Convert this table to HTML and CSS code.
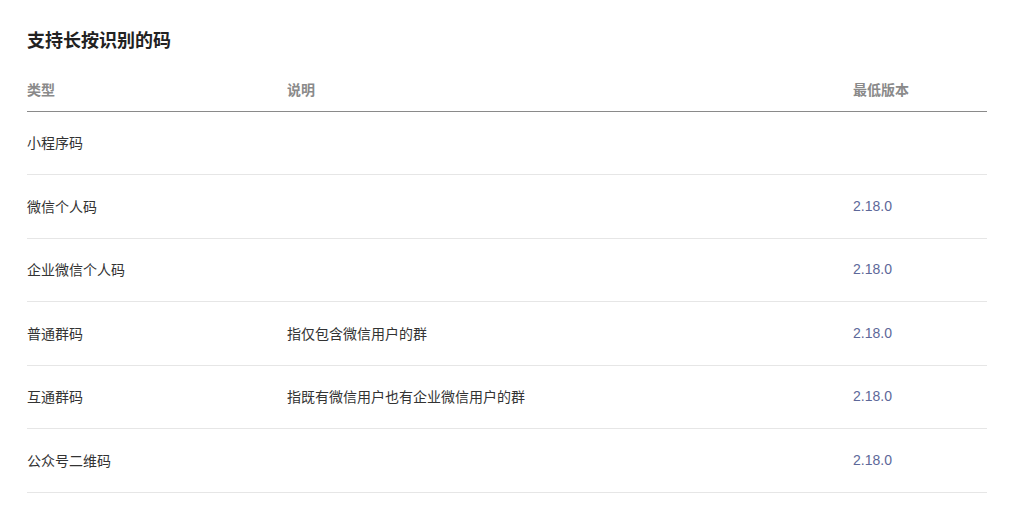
FILE: index.html
```html
<!DOCTYPE html>
<html lang="zh-CN">
<head>
<meta charset="utf-8">
<link rel="stylesheet" href="styles.css">
</head>
<body>
<div class="page">
  <h2 class="title">支持长按识别的码</h2>
  <table class="codes">
    <thead>
      <tr>
        <th class="c-type">类型</th>
        <th class="c-desc">说明</th>
        <th class="c-ver">最低版本</th>
      </tr>
    </thead>
    <tbody>
      <tr><td>小程序码</td><td></td><td class="ver"></td></tr>
      <tr><td>微信个人码</td><td></td><td class="ver">2.18.0</td></tr>
      <tr><td>企业微信个人码</td><td></td><td class="ver">2.18.0</td></tr>
      <tr><td>普通群码</td><td>指仅包含微信用户的群</td><td class="ver">2.18.0</td></tr>
      <tr><td>互通群码</td><td>指既有微信用户也有企业微信用户的群</td><td class="ver">2.18.0</td></tr>
      <tr><td>公众号二维码</td><td></td><td class="ver">2.18.0</td></tr>
    </tbody>
  </table>
</div>
</body>
</html>
```

FILE: styles.css
```css
html, body {
  margin: 0;
  padding: 0;
  background: #ffffff;
}
body {
  font-family: "Noto Sans CJK SC", "Noto Sans", "Liberation Sans", sans-serif;
  color: #333333;
}
.page {
  padding: 26px 37px 0 27px;
}
.title {
  margin: 0;
  font-size: 18px;
  line-height: 27px;
  font-weight: 700;
  color: #222222;
}
.codes {
  margin-top: 16px;
  width: 960px;
  border-collapse: collapse;
  font-size: 14px;
  line-height: 19.5px;
}
.codes th {
  text-align: left;
  font-weight: 700;
  color: #8a8a8a;
  padding: 11px 0;
  border-bottom: 1px solid #8a8a8a;
}
.c-type { width: 260px; }
.c-desc { width: 566px; }
.c-ver { width: 134px; }
.codes td {
  padding: 21.5px 0;
  border-bottom: 1px solid #e6e6e6;
  color: #333333;
  vertical-align: middle;
}
.codes td.ver {
  color: #5d6899;
  font-family: "Liberation Sans", "Noto Sans CJK SC", sans-serif;
  font-size: 14px;
}
```
